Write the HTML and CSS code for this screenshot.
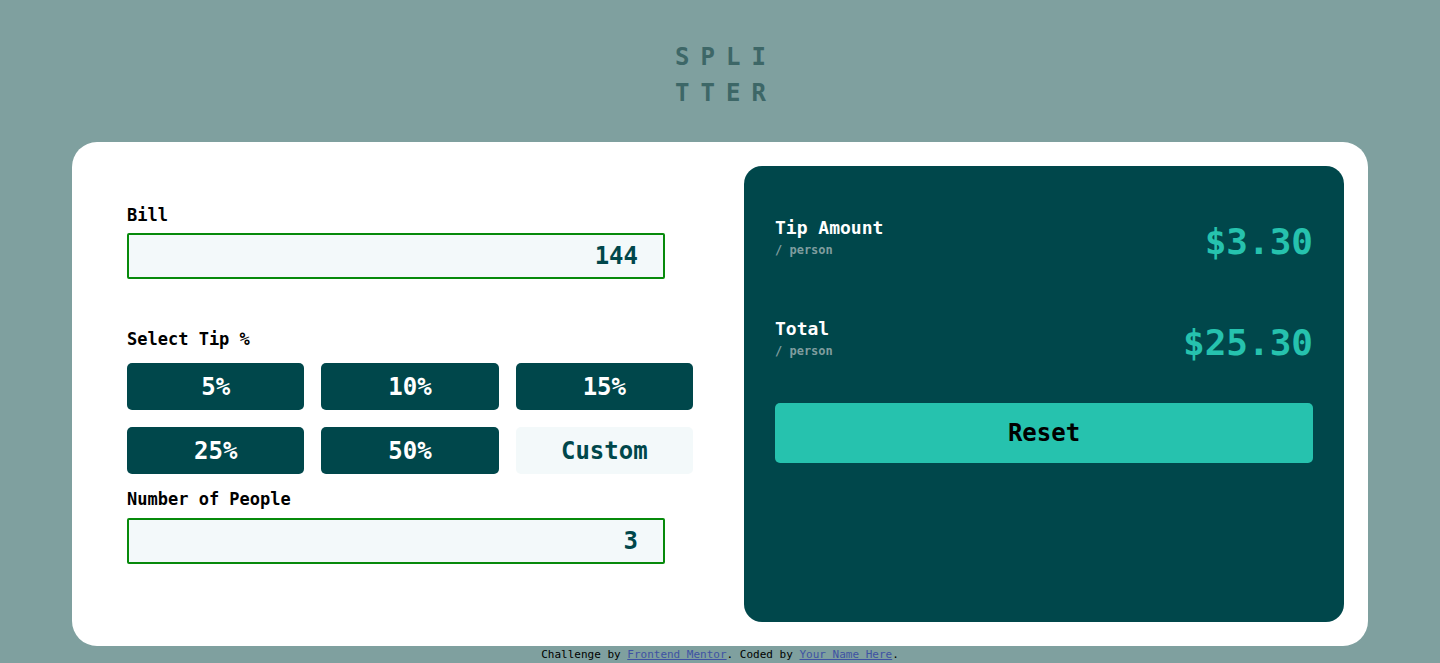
FILE: index.html
```html
<!DOCTYPE html>
<html lang="en">
<head>
<meta charset="utf-8">
<title>Splitter</title>
<link rel="stylesheet" href="styles.css">
</head>
<body>
  <header class="logo"><span>SPLI</span><span>TTER</span></header>
  <main class="card">
    <section class="inputs">
      <label class="label" for="bill">Bill</label>
      <input class="field" id="bill" type="text" value="144">
      <p class="label tip-label">Select Tip %</p>
      <div class="tips">
        <button class="tip">5%</button>
        <button class="tip">10%</button>
        <button class="tip">15%</button>
        <button class="tip">25%</button>
        <button class="tip">50%</button>
        <button class="tip custom">Custom</button>
      </div>
      <label class="label people-label" for="people">Number of People</label>
      <input class="field" id="people" type="text" value="3">
    </section>
    <section class="results">
      <div class="row">
        <div class="row-text">
          <div class="row-title">Tip Amount</div>
          <div class="row-sub">/ person</div>
        </div>
        <div class="amount">$3.30</div>
      </div>
      <div class="row row-total">
        <div class="row-text">
          <div class="row-title">Total</div>
          <div class="row-sub">/ person</div>
        </div>
        <div class="amount">$25.30</div>
      </div>
      <button class="reset">Reset</button>
    </section>
  </main>
  <footer class="attribution">Challenge by <a href="#">Frontend Mentor</a>. Coded by <a href="#">Your Name Here</a>.</footer>
</body>
</html>
```

FILE: styles.css
```css
* { box-sizing: border-box; }

body {
  margin: 0;
  background: #7fa09f;
  font-family: "DejaVu Sans Mono", "Liberation Mono", monospace;
  font-weight: bold;
}

.logo {
  display: flex;
  flex-direction: column;
  align-items: center;
  padding: 39px 0 0 12px;
  color: #3d6767;
  font-size: 24px;
  line-height: 36px;
  letter-spacing: 11px;
}

.card {
  width: 1296px;
  margin: 31px auto 0;
  background: #fff;
  border-radius: 25px;
  padding: 24px;
  display: flex;
  gap: 51px;
}

.inputs {
  width: 597px;
  padding: 39px 0 0 31px;
  display: flex;
  flex-direction: column;
  align-items: flex-start;
}

.label {
  margin: 0;
  font-size: 17px;
  line-height: 20px;
  color: #000;
}

.field {
  margin-top: 8px;
  width: 538px;
  height: 46px;
  border: 2px solid #078a0b;
  border-radius: 2px;
  background: #f3f9fa;
  color: #00474b;
  font-family: inherit;
  font-weight: bold;
  font-size: 24px;
  text-align: right;
  padding: 0 25px 0 10px;
  outline: none;
}

.tip-label { margin-top: 50px; }

.tips {
  margin-top: 14px;
  width: 566px;
  display: grid;
  grid-template-columns: repeat(3, 1fr);
  gap: 17px;
}

.tip {
  height: 47px;
  border: none;
  border-radius: 5px;
  background: #00474b;
  color: #fff;
  font-family: inherit;
  font-weight: bold;
  font-size: 24px;
  padding: 0;
}

.tip.custom {
  background: #f3f9fa;
  color: #00474b;
}

.people-label { margin-top: 15px; }

.people-label + .field { margin-top: 9px; }

.results {
  flex: 1;
  height: 456px;
  background: #00474b;
  border-radius: 18px;
  padding: 51px 31px 0;
  display: flex;
  flex-direction: column;
}

.row {
  display: flex;
  justify-content: space-between;
  align-items: flex-start;
}

.row-total { margin-top: 54px; }

.row-title {
  color: #fff;
  font-size: 18px;
  line-height: 22px;
}

.row-sub {
  margin-top: 3px;
  color: #7f9d9f;
  font-size: 12px;
  line-height: 16px;
}

.amount {
  margin-top: 3px;
  color: #26c2ae;
  font-size: 36px;
  line-height: 44px;
}

.reset {
  margin-top: 38px;
  height: 60px;
  border: none;
  border-radius: 5px;
  background: #26c2ae;
  color: #000;
  font-family: inherit;
  font-weight: bold;
  font-size: 24px;
}

.attribution {
  margin-top: 2px;
  text-align: center;
  font-size: 11px;
  line-height: 14px;
  font-weight: normal;
  color: #000;
}

.attribution a { color: #3e52a3; }
```
